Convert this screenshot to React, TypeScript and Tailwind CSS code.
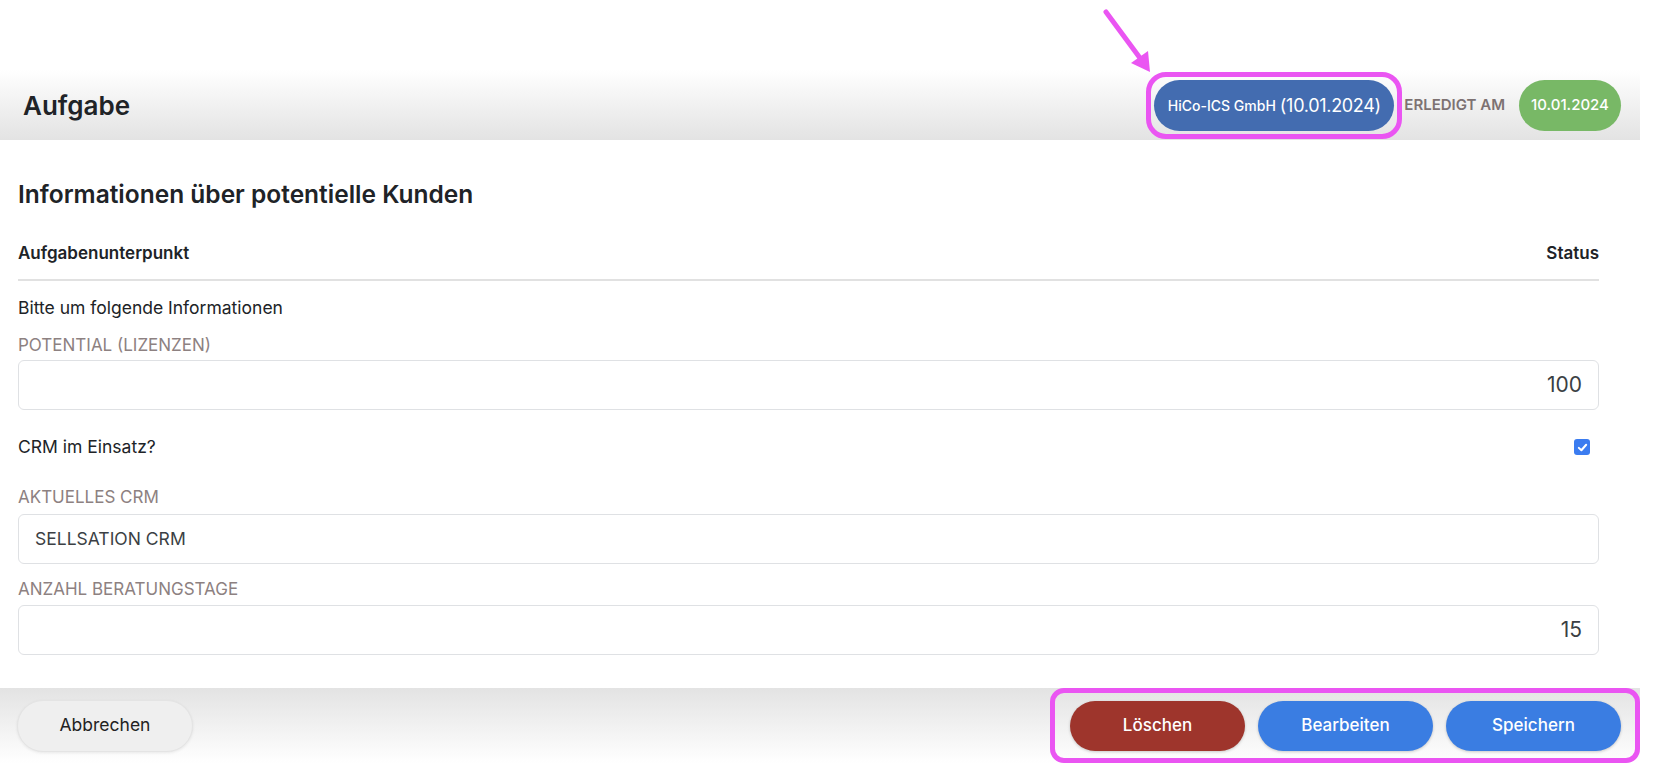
import React from "react";

const Label = ({ children }: { children: React.ReactNode }) => (
  <div className="h-6 flex items-center text-[17px] text-[#8d8181] uppercase">
    {children}
  </div>
);

const Field = ({ value, align = "right" }: { value: string; align?: "left" | "right" }) => (
  <div
    className={`h-[50px] rounded-[6px] border border-[#dfe1e4] bg-white flex items-center px-4 text-[#3b3f44] ${
      align === "right" ? "justify-end text-[21px]" : "justify-start text-[17.5px]"
    }`}
  >
    {value}
  </div>
);

export default function App() {
  return (
    <div className="relative w-[1640px] h-[776px] bg-white font-['Inter',sans-serif] text-[#202327]">
      {/* annotation arrow */}
      <svg
        className="absolute left-[1095px] top-[4px]"
        width="70"
        height="80"
        viewBox="0 0 70 80"
      >
        <line x1="11" y1="8" x2="45" y2="54" stroke="#ea55f2" strokeWidth="5" strokeLinecap="round" />
        <polygon points="55,68 36,59 53,47" fill="#ea55f2" />
      </svg>

      <div className="h-[70px]" />

      <header className="h-[70px] flex items-center pl-[23px] pr-[19px] bg-gradient-to-b from-white to-[#e3e3e3]">
        <h1 className="text-[26px] font-semibold">Aufgabe</h1>
        <div className="ml-auto flex items-center">
          <div className="rounded-[20px] border-[5px] border-[#ea55f2] p-[3px]">
            <button className="h-[51px] w-[240px] rounded-full bg-[#436cb0] text-white flex items-center justify-center gap-1">
              <span className="text-[14px] font-medium">HiCo-ICS GmbH</span>
              <span className="text-[18px] tracking-[-0.3px]">(10.01.2024)</span>
            </button>
          </div>
          <span className="ml-[2px] text-[15px] font-semibold text-[#7d7272]">ERLEDIGT AM</span>
          <span className="ml-[14px] h-[51px] w-[102px] rounded-full bg-[#78b866] text-white text-[15px] font-medium flex items-center justify-center">
            10.01.2024
          </span>
        </div>
      </header>

      <main className="pl-[18px] pr-[41px]">
        <h2 className="mt-[38px] h-8 flex items-center text-[24.5px] font-semibold">
          Informationen über potentielle Kunden
        </h2>

        <div className="mt-8 pb-[13px] border-b-2 border-[#e1e1e1]">
          <div className="h-6 flex items-center justify-between text-[17px] font-semibold">
            <span>Aufgabenunterpunkt</span>
            <span>Status</span>
          </div>
        </div>

        <div className="mt-[15px] h-6 flex items-center text-[17.5px]">
          Bitte um folgende Informationen
        </div>

        <div className="mt-[14px]">
          <Label>Potential (Lizenzen)</Label>
        </div>
        <div className="mt-[2px]">
          <Field value="100" />
        </div>

        <div className="mt-[25px] h-6 flex items-center justify-between text-[17.5px]">
          <span>CRM im Einsatz?</span>
          <span className="mr-[9px] w-4 h-4 rounded-[3px] bg-[#3b7cf0] flex items-center justify-center">
            <svg width="11" height="11" viewBox="0 0 12 12">
              <path d="M2 6.4 L4.8 9 L10 3" fill="none" stroke="white" strokeWidth="2.2" strokeLinecap="round" strokeLinejoin="round" />
            </svg>
          </span>
        </div>

        <div className="mt-[27px]">
          <Label>Aktuelles CRM</Label>
        </div>
        <div className="mt-1">
          <Field value="SELLSATION CRM" align="left" />
        </div>

        <div className="mt-[14px]">
          <Label>Anzahl Beratungstage</Label>
        </div>
        <div className="mt-[3px]">
          <Field value="15" />
        </div>
      </main>

      <footer className="mt-[33px] h-[75px] flex items-center pl-[17px] bg-gradient-to-b from-[#e3e3e3] to-white">
        <button className="h-[52px] w-[176px] rounded-full bg-[#efefef] border border-[#e4e4e4] shadow-[0_1px_3px_rgba(0,0,0,0.08)] text-[17.5px] text-[#222]">
          Abbrechen
        </button>
        <div className="ml-auto h-[75px] w-[590px] rounded-[14px] border-[5px] border-[#ea55f2] flex items-center gap-[13px] pl-[15px] pr-[14px]">
          <button className="h-[50px] w-[175px] rounded-full bg-[#9e352c] text-white text-[17px] font-medium shadow-[0_1px_3px_rgba(0,0,0,0.2)]">
            Löschen
          </button>
          <button className="h-[50px] w-[175px] rounded-full bg-[#3a7de2] text-white text-[17px] font-medium shadow-[0_1px_3px_rgba(0,0,0,0.2)]">
            Bearbeiten
          </button>
          <button className="h-[50px] w-[175px] rounded-full bg-[#3a7de2] text-white text-[17px] font-medium shadow-[0_1px_3px_rgba(0,0,0,0.2)]">
            Speichern
          </button>
        </div>
      </footer>
    </div>
  );
}
